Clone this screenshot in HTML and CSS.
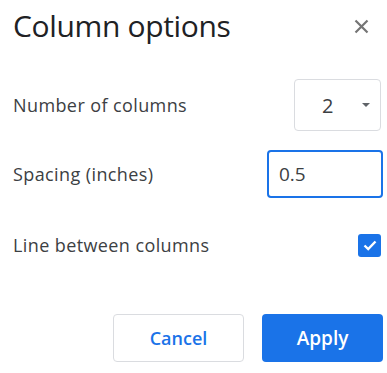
FILE: index.html
```html
<!DOCTYPE html>
<html>
<head>
<meta charset="utf-8">
<link rel="stylesheet" href="styles.css">
</head>
<body>
<div class="dialog">
  <div class="header">
    <h1 class="title">Column options</h1>
    <button class="close" aria-label="Close">
      <svg width="15" height="15" viewBox="0 0 15 15"><path d="M1.5 1.5 L13.5 13.5 M13.5 1.5 L1.5 13.5" stroke="#757575" stroke-width="2.2" fill="none"/></svg>
    </button>
  </div>
  <div class="row row-cols">
    <span class="label">Number of columns</span>
    <div class="select">
      <span class="select-value">2</span>
      <svg class="caret" width="8" height="4" viewBox="0 0 8 4"><path d="M0 0 L8 0 L4 4 Z" fill="#5f6368"/></svg>
    </div>
  </div>
  <div class="row row-spacing">
    <span class="label">Spacing (inches)</span>
    <div class="input">0.5</div>
  </div>
  <div class="row row-line">
    <span class="label">Line between columns</span>
    <div class="checkbox">
      <svg width="16" height="16" viewBox="0 0 16 16"><path d="M2.5 8.5 L6.2 12 L13.5 4.5" stroke="#fff" stroke-width="2.4" fill="none"/></svg>
    </div>
  </div>
  <div class="actions">
    <button class="btn btn-cancel">Cancel</button>
    <button class="btn btn-apply">Apply</button>
  </div>
</div>
</body>
</html>
```
FILE: styles.css
```css
html, body {
  margin: 0;
  padding: 0;
  background: #ffffff;
}
body {
  font-family: "Open Sans", "Roboto", sans-serif;
  color: #3c4043;
}
.dialog {
  width: 387px;
  height: 373px;
  box-sizing: border-box;
  padding: 0 4px 0 13px;
  display: flex;
  flex-direction: column;
}
.header {
  height: 52px;
  display: flex;
  align-items: center;
  justify-content: space-between;
}
.title {
  margin: 0;
  font-size: 30px;
  font-weight: 400;
  color: #202124;
  line-height: 36px;
  letter-spacing: -0.35px;
}
.close {
  border: 0;
  background: none;
  padding: 0;
  margin-right: 14px;
  width: 15px;
  height: 15px;
  display: flex;
}
.row {
  display: flex;
  align-items: center;
  justify-content: space-between;
}
.label {
  font-size: 18px;
  font-weight: 500;
  color: #3c4043;
  letter-spacing: 0.4px;
}
.row-cols {
  margin-top: 27px;
  height: 52px;
}
.select {
  width: 87px;
  height: 52px;
  box-sizing: border-box;
  border: 1px solid #dadce0;
  border-radius: 4px;
  margin-right: 2px;
  display: flex;
  align-items: center;
  padding-left: 27px;
}
.select-value {
  font-size: 20px;
  color: #3c4043;
  width: 40px;
}
.row-spacing {
  margin-top: 19px;
  height: 48px;
}
.input {
  width: 116px;
  height: 48px;
  box-sizing: border-box;
  border: 2px solid #1a73e8;
  border-radius: 4px;
  display: flex;
  align-items: center;
  padding-left: 10px;
  font-size: 19px;
  color: #3c4043;
}
.row-line {
  margin-top: 34px;
  height: 26px;
}
.checkbox {
  width: 23px;
  height: 23px;
  border-radius: 3px;
  background: #1a73e8;
  display: flex;
  align-items: center;
  justify-content: center;
  margin-right: 2px;
}
.actions {
  margin-top: 56px;
  display: flex;
  justify-content: flex-end;
  gap: 18px;
}
.btn {
  height: 48px;
  border-radius: 4px;
  font-family: "Open Sans", "Roboto", sans-serif;
  font-size: 18px;
  font-weight: 600;
  padding: 0;
}
.btn-cancel {
  width: 131px;
  background: #fff;
  border: 1px solid #dadce0;
  color: #1a73e8;
}
.btn-apply {
  width: 121px;
  background: #1a73e8;
  border: 0;
  color: #fff;
  font-size: 19px;
}
```
